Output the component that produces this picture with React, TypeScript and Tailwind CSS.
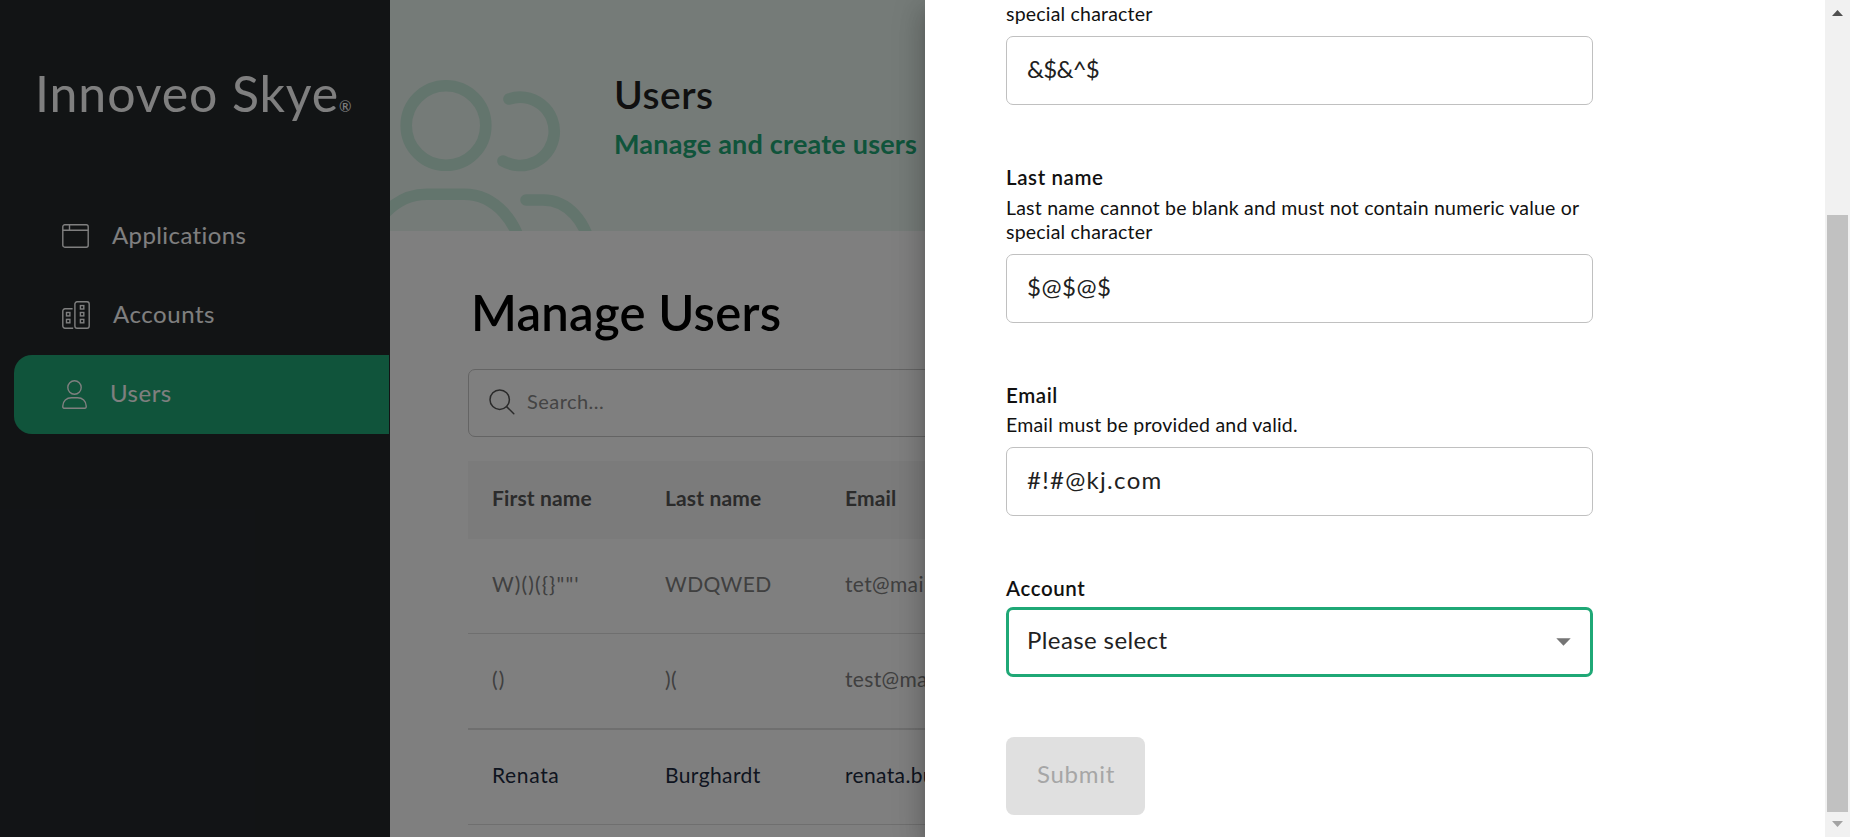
import React from 'react';

function AppsIcon() {
  return (
    <svg className="-mt-[2px]" width="27" height="24" viewBox="0 0 27 24" fill="none" stroke="currentColor" strokeWidth="1.4">
      <rect x="0.8" y="0.8" width="25.4" height="22.4" rx="2" />
      <path d="M0.8 6.2H26.2M7.5 0.8V6.2" />
    </svg>
  );
}

function AccountsIcon() {
  return (
    <svg className="-mt-px" width="28" height="28" viewBox="0 0 28 28" fill="none" stroke="currentColor" strokeWidth="1.4">
      <path d="M10.6 7.8H3a2.2 2.2 0 0 0-2.2 2.2v15a2.2 2.2 0 0 0 2.2 2.2h8.2" />
      <rect x="12.9" y="0.8" width="14.3" height="26.4" rx="2.2" />
      <rect x="4.5" y="11.5" width="3.4" height="3.4" />
      <rect x="4.5" y="18.4" width="3.4" height="3.4" />
      <rect x="18.4" y="4.6" width="3.4" height="3.4" />
      <rect x="18.4" y="11.5" width="3.4" height="3.4" />
      <rect x="18.4" y="18.4" width="3.4" height="3.4" />
    </svg>
  );
}

function UserIcon() {
  return (
    <svg className="-mt-px" width="25" height="29" viewBox="0 0 25 29" fill="none" stroke="currentColor" strokeWidth="1.4">
      <circle cx="12.5" cy="7.5" r="6.7" />
      <path d="M0.8 27.1v-1C0.8 21 4.6 17.8 9.5 17.8h6c4.9 0 8.7 3.2 8.7 8.3v1a1.1 1.1 0 0 1-1.1 1.1H1.9A1.1 1.1 0 0 1 0.8 27.1Z" />
    </svg>
  );
}

function PeopleArt() {
  return (
    <svg className="shrink-0" width="210" height="161" viewBox="0 0 210 161" fill="none" stroke="#c6eada" strokeWidth="11.6" strokeLinecap="round">
      <circle cx="56" cy="55.5" r="39.8" />
      <path d="M119 29A34.2 34.2 0 1 1 113 91" />
      <path d="M-24 190C-22 151 6 124.2 37 124.2H74C104 124.2 130 151 133 190" />
      <path d="M136 130H153C176 130 198 149 203 190" />
    </svg>
  );
}

const rows = [
  { cells: ['W)()({}""\'', 'WDQWED', 'tet@mail.com'], cls: 'h-[95px] border-b text-[#808080]', first: 'tracking-[1.1px]' },
  { cells: ['()', ')(', 'test@mail.com'], cls: 'h-[96px] border-b-2 text-[#808080]', first: 'tracking-[1.1px]' },
  { cells: ['Renata', 'Burghardt', 'renata.burghardt'], cls: 'h-[95px] border-b text-[#1c2a40]', first: 'tracking-[0.65px]' },
];

const navItem = 'ml-[14px] mr-px flex h-[79px] items-center gap-[23px] rounded-l-[18px] pl-12 text-2xl text-white';

function Label({ children }: { children: React.ReactNode }) {
  return <div className="text-[20.5px] leading-6 font-semibold tracking-[0.6px] text-[#111]">{children}</div>;
}

function Hint({ children }: { children: React.ReactNode }) {
  return <p className="mb-[10px] text-[19.5px] leading-6 tracking-[0.2px] text-[#111]">{children}</p>;
}

function Field({ children }: { children: React.ReactNode }) {
  return (
    <div className="flex h-[69px] items-center rounded-[7px] border border-[#c0c0c0] pb-1 pl-5 text-2xl text-[#212121]">
      {children}
    </div>
  );
}

export default function App() {
  return (
    <div className="relative h-[837px] w-[1850px] overflow-hidden bg-white font-['Lato',sans-serif]">
      <div className="flex h-full">
        <aside className="w-[390px] shrink-0 bg-[#24282b]">
          <div className="flex h-[197px] items-start pt-[63px] pl-[35px] text-white">
            <div className="text-[50px] leading-[60px] tracking-[0.9px] whitespace-nowrap">
              Innoveo Skye<span className="text-[15px] tracking-normal">®</span>
            </div>
          </div>
          <nav>
            <div className={navItem}>
              <AppsIcon />
              <span className="pb-[3px] tracking-[0.4px]">Applications</span>
            </div>
            <div className={navItem}>
              <AccountsIcon />
              <span className="pb-[3px] tracking-[0.55px]">Accounts</span>
            </div>
            <div className={`${navItem} bg-[#21a876]`}>
              <UserIcon />
              <span className="pb-[3px] tracking-[0.5px]">Users</span>
            </div>
          </nav>
        </aside>

        <main className="min-w-0 flex-1">
          <header className="flex h-[231px] items-start overflow-hidden bg-[#eaf6f0]">
            <div className="pt-[70px]">
              <PeopleArt />
            </div>
            <div className="pt-[70px] pl-[14px]">
              <h2 className="text-[39px] leading-[48px] font-semibold tracking-[0.5px] text-[#212121]">Users</h2>
              <p className="mt-2 text-[27px] leading-9 font-bold tracking-[0.2px] text-[#21a876]">
                Manage and create users
              </p>
            </div>
          </header>
          <section className="pt-[51px] pl-[78px]">
            <h1 className="pl-[3px] text-[49px] leading-[60px] font-semibold tracking-[0.25px] text-black">Manage Users</h1>
            <div className="mt-[27px] flex h-[68px] items-center gap-[12px] rounded-[7px] border border-[#c8c8c8] pl-5 text-[20px] text-[#888]">
              <svg className="-mt-[2px]" width="26" height="26" viewBox="0 0 26 26" fill="none" stroke="#555" strokeWidth="1.5" strokeLinecap="round">
                <circle cx="10.7" cy="10.7" r="9.7" />
                <path d="M17.6 17.6L24.8 24.8" />
              </svg>
              <span className="pb-1 tracking-[0.45px]">Search...</span>
            </div>
            <div className="mt-6 grid h-[78px] grid-cols-[173px_180px_1fr] items-center bg-[#f6f6f6] pb-[5px] pl-[24px] text-[21px] font-bold tracking-[0.15px] text-[#565656]">
              <span>First name</span>
              <span>Last name</span>
              <span>Email</span>
            </div>
            {rows.map((r) => (
              <div
                key={r.cells[0]}
                className={`grid grid-cols-[173px_180px_1fr] items-center border-[#dedede] pb-[5px] pl-[24px] text-[21px] ${r.cls}`}
              >
                <span className={r.first}>{r.cells[0]}</span>
                <span className="tracking-[0.4px]">{r.cells[1]}</span>
                <span className="tracking-[0.35px]">{r.cells[2]}</span>
              </div>
            ))}
          </section>
        </main>
      </div>

      <div className="absolute inset-0 bg-black/50" />

      <div className="absolute inset-y-0 right-0 flex w-[925px] bg-white shadow-[0_8px_10px_-5px_rgba(0,0,0,0.2),0_16px_24px_2px_rgba(0,0,0,0.14),0_6px_30px_5px_rgba(0,0,0,0.12)]">
        <div className="flex-1 pt-[2px] pl-[81px]">
          <form className="flex w-[587px] flex-col items-stretch">
            <div className="mb-[60px]">
              <Hint>special character</Hint>
              <Field>
                <span className="tracking-[-0.8px]">&amp;$&amp;^$</span>
              </Field>
            </div>
            <div className="mb-[60px]">
              <Label>Last name</Label>
              <div className="pt-[7px]">
                <Hint>
                  Last name cannot be blank and must not contain numeric value or
                  <br />
                  special character
                </Hint>
              </div>
              <Field>
                <span className="tracking-[0.5px]">$@$@$</span>
              </Field>
            </div>
            <div className="mb-[60px]">
              <Label>Email</Label>
              <div className="pt-[6px]">
                <Hint>Email must be provided and valid.</Hint>
              </div>
              <Field>
                <span className="tracking-[1.3px]">#!#@kj.com</span>
              </Field>
            </div>
            <div className="mb-[60px]">
              <Label>Account</Label>
              <div className="mt-[7px] flex h-[70px] items-center justify-between rounded-[7px] border-3 border-[#1fa876] pr-[19px] pl-[18px] text-2xl text-[#212121]">
                <span className="pb-1 tracking-[0.4px]">Please select</span>
                <svg width="15" height="8" viewBox="0 0 15 8" fill="#757575">
                  <path d="M0.3 0.3H14.7L7.5 7.8Z" />
                </svg>
              </div>
            </div>
            <div className="flex h-[78px] w-[139px] items-center justify-center rounded-lg bg-[#e0e0e0] pb-1 pl-px text-2xl tracking-[0.7px] text-[#a6a6a6]">
              Submit
            </div>
          </form>
        </div>
        <div className="flex w-[25px] flex-col items-center bg-[#f1f1f1]">
          <svg className="mt-[10px]" width="11" height="6" viewBox="0 0 11 6" fill="#505050">
            <path d="M0 6L5.5 0L11 6Z" />
          </svg>
          <div className="mt-[199px] h-[597px] w-[21px] bg-[#c1c1c1]" />
          <svg className="mt-[9px]" width="11" height="6" viewBox="0 0 11 6" fill="#a3a3a3">
            <path d="M0 0L5.5 6L11 0Z" />
          </svg>
        </div>
      </div>
    </div>
  );
}
